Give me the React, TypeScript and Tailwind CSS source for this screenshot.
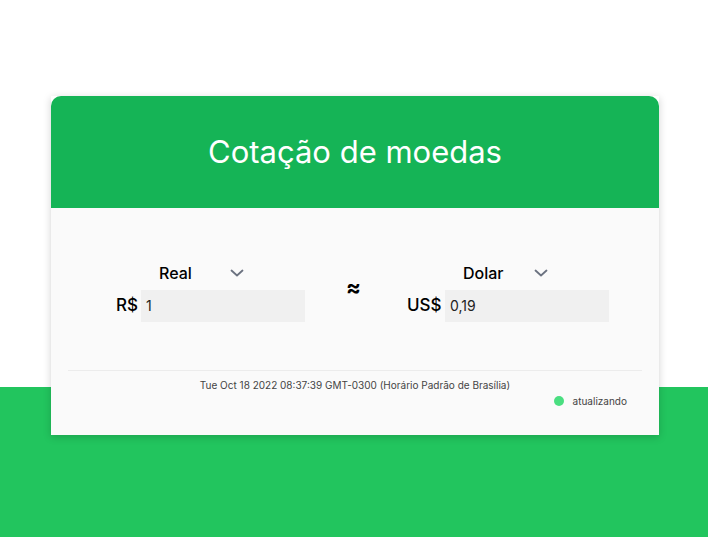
import React from "react";

function Chevron() {
  return (
    <svg width="14" height="8" viewBox="0 0 14 8" fill="none">
      <path d="M1.5 1.5 L7 6.5 L12.5 1.5" stroke="#6b7280" strokeWidth="1.8" strokeLinecap="round" strokeLinejoin="round" />
    </svg>
  );
}

function Currency({
  name,
  symbol,
  value,
  labelW,
}: {
  name: string;
  symbol: string;
  value: string;
  labelW: string;
}) {
  return (
    <div className="flex flex-col">
      <div className="flex items-end">
        <span className={`invisible text-[17px] ${labelW}`}>{symbol}</span>
        <div className="ml-[22px] flex h-[24px] w-[85px] items-center justify-between">
          <span className="text-[16px] font-medium text-black">{name}</span>
          <Chevron />
        </div>
      </div>
      <div className="mt-[5px] flex items-center">
        <span className={`text-[17px] font-medium text-black ${labelW}`}>{symbol}</span>
        <div className="ml-[4px] flex h-[32px] w-[164px] items-center bg-[#f0f0f0] pl-[5px] text-[14px] text-[#222]">
          {value}
        </div>
      </div>
    </div>
  );
}

export default function App() {
  return (
    <div
      className="h-[537px] w-full overflow-hidden bg-[linear-gradient(to_bottom,#ffffff_387px,#22c55e_387px)] pt-[96px]"
      style={{ fontFamily: "Inter, 'Noto Sans', sans-serif" }}
    >
      <div className="ml-[51px] w-[608px] shadow-[0_2px_8px_rgba(0,0,0,0.18)]">
        <div className="flex h-[112px] items-center justify-center rounded-t-[10px] bg-[#15b456]">
          <h1 className="text-[31px] font-normal text-white">Cotação de moedas</h1>
        </div>
        <div className="flex h-[227px] flex-col bg-[#fafafa]">
          <div className="mt-[51px] flex items-end pl-[65px]">
            <Currency name="Real" symbol="R$" value="1" labelW="w-[21px]" />
            <div className="mb-[24px] ml-[41px] mr-[46px] text-[22px] font-bold leading-none text-black">≈</div>
            <Currency name="Dolar" symbol="US$" value="0,19" labelW="w-[34px]" />
          </div>
          <div className="mx-[17px] mt-[48px] border-t border-[#ececec]" />
          <div className="mt-[7px] text-center text-[10px] text-[#444]">
            Tue Oct 18 2022 08:37:39 GMT-0300 (Horário Padrão de Brasília)
          </div>
          <div className="mt-[1px] flex items-center justify-end pr-[32px]">
            <span className="h-[10px] w-[10px] rounded-full bg-[#4ade80]" />
            <span className="ml-[9px] text-[10px] text-[#444]">atualizando</span>
          </div>
        </div>
      </div>
    </div>
  );
}
